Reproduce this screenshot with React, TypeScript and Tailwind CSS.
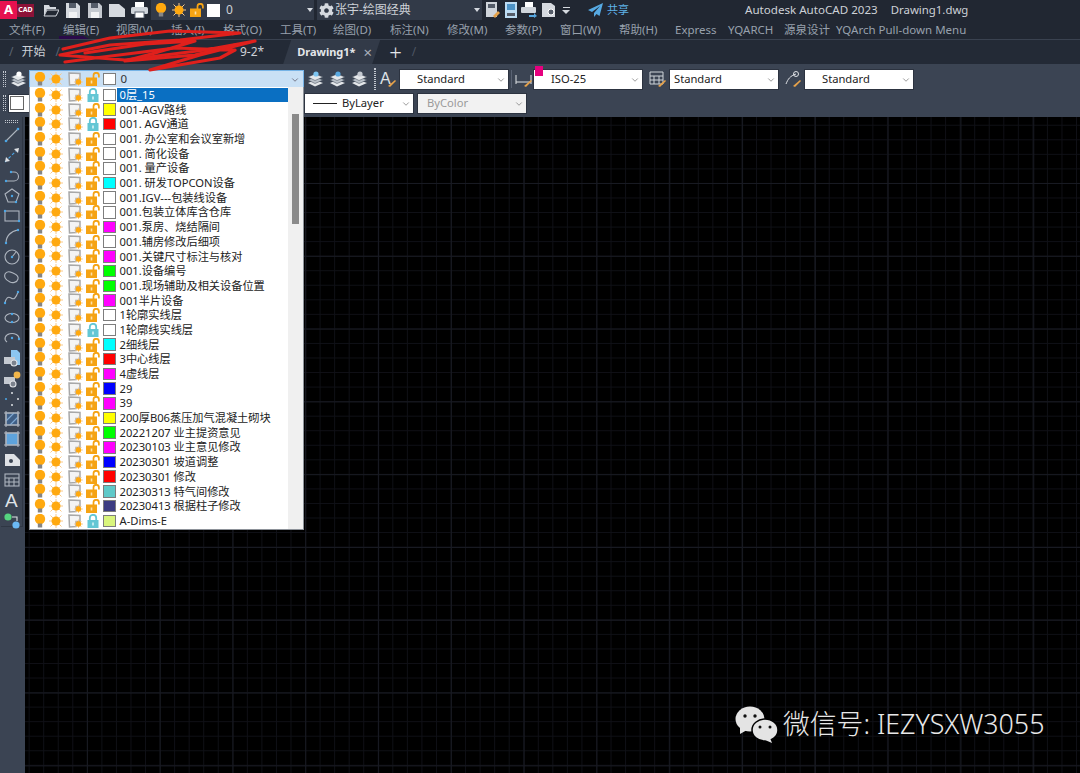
import { FaCog } from "react-icons/fa";
import { ChevronDown } from "lucide-react";

const cjk = "font-['Noto_Sans','Noto_Sans_CJK_SC',sans-serif]";

const menus = [
  ["文件(F)", "w-[54px]"],
  ["编辑(E)", "w-[53px]"],
  ["视图(V)", "w-[55px]"],
  ["插入(I)", "w-[52px]"],
  ["格式(O)", "w-[57px]"],
  ["工具(T)", "w-[53px]"],
  ["绘图(D)", "w-[57px]"],
  ["标注(N)", "w-[57px]"],
  ["修改(M)", "w-[58px]"],
  ["参数(P)", "w-[55px]"],
  ["窗口(W)", "w-[59px]"],
  ["帮助(H)", "w-[56px]"],
  ["Express", "w-[53px]"],
  ["YQARCH", "w-[56px]"],
  ["源泉设计", "w-[52px]"],
  ["YQArch Pull-down Menu", "w-[140px]"],
];

const layers: [string, string, boolean?][] = [
  ["0层_15", "#ffffff", true],
  ["001-AGV路线", "#ffff00"],
  ["001. AGV通道", "#ff0000", true],
  ["001. 办公室和会议室新增", "#ffffff"],
  ["001. 简化设备", "#ffffff"],
  ["001. 量产设备", "#ffffff"],
  ["001. 研发TOPCON设备", "#00ffff"],
  ["001.IGV---包装线设备", "#ffffff"],
  ["001.包装立体库含仓库", "#ffffff"],
  ["001.泵房、烧结隔间", "#ff00ff"],
  ["001.辅房修改后细项", "#ffffff"],
  ["001.关键尺寸标注与核对", "#ff00ff"],
  ["001.设备编号", "#00ff00"],
  ["001.现场辅助及相关设备位置", "#00ff00"],
  ["001半片设备", "#ff00ff"],
  ["1轮廓实线层", "#ffffff"],
  ["1轮廓线实线层", "#ffffff", true],
  ["2细线层", "#00ffff"],
  ["3中心线层", "#ff0000"],
  ["4虚线层", "#ff00ff"],
  ["29", "#0000ff"],
  ["39", "#ff00ff"],
  ["200厚B06蒸压加气混凝土砌块", "#ffff00"],
  ["20221207 业主提资意见", "#00ff00"],
  ["20230103 业主意见修改", "#ff00ff"],
  ["20230301 坡道调整", "#0000ff"],
  ["20230301 修改", "#ff0000"],
  ["20230313 特气间修改", "#5fc9c9"],
  ["20230413 根据柱子修改", "#3c3c82"],
  ["A-Dims-E", "#d9f57c", true],
];

function Bulb() {
  return (
    <svg width="12" height="14" viewBox="0 0 12 14" className="shrink-0">
      <circle cx="6" cy="5" r="5.2" fill="#ffa90f" />
      <rect x="3.8" y="9.5" width="4.4" height="4" fill="#858585" />
    </svg>
  );
}

function Sun({ size = 14 }: { size?: number }) {
  return (
    <svg width={size} height={size} viewBox="0 0 14 14" className="shrink-0">
      <g stroke="#f9c98a" strokeWidth="1">
        <path d="M7 0v14M0 7h14M1.5 1.5l11 11M12.5 1.5l-11 11" />
      </g>
      <circle cx="7" cy="7" r="4.5" fill="#ffa90f" />
    </svg>
  );
}

function Frame() {
  return (
    <svg width="15" height="14" viewBox="0 0 15 14" className="shrink-0">
      <path d="M1 1l11 .5v6h-4v5l-6.5.5z" fill="#f4f4f4" stroke="#a8a8a8" strokeWidth="1.5" />
      <g stroke="#f9c98a" strokeWidth=".9">
        <path d="M10.5 5.5v8.5M6 10h9M7.5 7l6 6M13.5 7l-6 6" />
      </g>
      <circle cx="10.5" cy="10" r="2.7" fill="#ffa90f" />
    </svg>
  );
}

function Lock({ closed }: { closed?: boolean }) {
  if (closed) {
    return (
      <svg width="14" height="14" viewBox="0 0 14 14" className="shrink-0">
        <path d="M3.8 6.5V4a3.2 3.2 0 016.4 0v2.5" fill="none" stroke="#63c6d4" strokeWidth="1.8" />
        <rect x="1.5" y="6" width="11" height="8" fill="#63c6d4" />
        <rect x="6.2" y="8.5" width="1.6" height="3" fill="#d8f3f6" />
      </svg>
    );
  }
  return (
    <svg width="14" height="14" viewBox="0 0 14 14" className="shrink-0">
      <path d="M7.5 6.5V3.5a2.7 2.7 0 015.4 0v2" fill="none" stroke="#f5a313" strokeWidth="1.7" />
      <rect x="0" y="5.5" width="11" height="8.5" fill="#f5a313" />
      <rect x="4.7" y="8.5" width="1.6" height="3" fill="#fbe0a8" />
    </svg>
  );
}

function LayerIcons({ closed }: { closed?: boolean }) {
  return (
    <>
      <span className="ml-[4px]"><Bulb /></span>
      <span className="ml-[3px]"><Sun /></span>
      <span className="ml-[5px]"><Frame /></span>
      <span className="ml-[3px]"><Lock closed={closed} /></span>
    </>
  );
}

function Swatch({ color }: { color: string }) {
  return (
    <span
      className="ml-[3px] h-[12.5px] w-[12.5px] shrink-0 border border-[#7d7d7d]"
      style={{ backgroundColor: color }}
    />
  );
}

function Grip() {
  return <span className="mx-[3px] h-[16px] w-[3px] shrink-0 border-x border-dotted border-[#c3c8d0]" />;
}

function Doc({ tone = "#d5d9df" }: { tone?: string }) {
  return (
    <svg width="16" height="17" viewBox="0 0 16 17" className="shrink-0">
      <path d="M1 1h11l3 3v12H1z" fill={tone} />
      <rect x="4" y="1" width="7" height="5" fill="#545c69" />
      <rect x="4" y="10" width="8" height="6" fill="#f1f2f4" />
    </svg>
  );
}

function Printer() {
  return (
    <svg width="17" height="16" viewBox="0 0 17 16" className="shrink-0">
      <rect x="4" y="0" width="9" height="5" fill="#fff" />
      <rect x="0" y="5" width="17" height="7" rx="1.5" fill="#cfd4da" />
      <rect x="4" y="10" width="9" height="6" fill="#fff" stroke="#59616e" />
    </svg>
  );
}

function LayerStack({ accent = "#ffffff" }: { accent?: string }) {
  return (
    <svg width="17" height="16" viewBox="0 0 17 16" className="shrink-0">
      <path d="M1 12l7-3 8 3-8 3.5z" fill="#e4e7ea" />
      <path d="M1 9l7-3 8 3-8 3.5z" fill="#bcc3cb" stroke="#3b4453" strokeWidth=".5" />
      <path d="M1 6l7-3 8 3-8 3.5z" fill="#e4e7ea" stroke="#3b4453" strokeWidth=".5" />
      <circle cx="9" cy="3" r="2.6" fill={accent} />
    </svg>
  );
}

function Brush({ children }: { children: React.ReactNode }) {
  return (
    <svg width="18" height="18" viewBox="0 0 18 18" className="shrink-0">
      {children}
      <path d="M9 16l7-6 1 1-6 6z" fill="#e6a24a" />
    </svg>
  );
}

function Combo({
  label,
  className = "",
  disabled,
}: {
  label: string;
  className?: string;
  disabled?: boolean;
}) {
  return (
    <div
      className={`relative flex h-[21px] w-[110px] shrink-0 items-center border border-[#2c3340] pl-[17px] text-[11.2px] ${
        disabled ? "bg-[#f2f2f2] text-[#9a9a9a]" : "bg-white text-[#222]"
      } ${className}`}
    >
      {label}
      <ChevronDown className="absolute right-[2px] top-[5px] h-[10px] w-[10px] text-[#888]" />
    </div>
  );
}

function TitleBar() {
  return (
    <div className="flex h-[20px] items-center bg-[#212732] text-[#cdd1d7]">
      <span className="flex h-[18px] w-[17px] items-center justify-center bg-[#e6114f] text-[13px] font-bold text-white">
        A
      </span>
      <span className="flex h-[13px] w-[17px] items-center justify-center bg-[#8c1238] text-[7px] font-bold text-white">
        CAD
      </span>
      <div className="ml-[9px] flex w-[108px] items-center justify-between pr-[3px]">
        <svg width="16" height="14" viewBox="0 0 16 14" className="shrink-0">
          <path d="M1 2h5l1 2h6v2H4L1 13z" fill="#d5d9df" />
          <path d="M4 7h12l-3 6H1z" fill="none" stroke="#d5d9df" />
        </svg>
        <Doc />
        <Doc tone="#c4c9d0" />
        <svg width="16" height="15" viewBox="0 0 16 15" className="shrink-0">
          <path d="M0 1h10l6 5v8H0z" fill="#d5d9df" />
        </svg>
        <Printer />
      </div>
      <div className="relative flex h-[20px] w-[163px] items-center bg-[#323a48]">
        <span className="ml-[4px]"><Bulb /></span>
        <span className="ml-[5px]"><Sun /></span>
        <span className="ml-[4px]"><Lock /></span>
        <span className="ml-[3px] h-[13px] w-[13px] bg-white" />
        <span className="ml-[6px] text-[12px]">0</span>
        <span className="absolute right-[1px] top-[8px] h-0 w-0 border-x-[3px] border-t-[4px] border-x-transparent border-t-[#d5d9df]" />
      </div>
      <div className="relative ml-[3px] flex h-[20px] w-[165px] items-center bg-[#323a48] text-[12px]">
        <FaCog className="ml-[2px] h-[15px] w-[15px] text-[#d5d9df]" />
        <span className="ml-[1px]">张宇-绘图经典</span>
        <span className="absolute right-[2px] top-[8px] h-0 w-0 border-x-[3px] border-t-[4px] border-x-transparent border-t-[#d5d9df]" />
      </div>
      <div className="ml-[4px] flex w-[84px] items-center justify-between">
        <svg width="14" height="16" viewBox="0 0 14 16" className="shrink-0">
          <rect x="0" y="0" width="11" height="15" fill="#cfd4da" />
          <rect x="2" y="2" width="7" height="4" fill="#545c69" />
          <path d="M7 14l5-5 2 2-5 5z" fill="#e6a24a" />
        </svg>
        <svg width="12" height="16" viewBox="0 0 12 16" className="shrink-0">
          <rect x="0" y="0" width="12" height="16" fill="#bcdcf3" />
          <rect x="2" y="2" width="8" height="6" fill="#4d93c6" />
          <rect x="2" y="11" width="8" height="3" fill="#545c69" />
        </svg>
        <svg width="16" height="16" viewBox="0 0 16 16" className="shrink-0">
          <rect x="4" y="0" width="8" height="5" fill="#fff" />
          <rect x="0" y="5" width="15" height="6" rx="1" fill="#cfd4da" />
          <path d="M8 13h5v-2l3 3-3 2v-1H8z" fill="#58a8e0" />
        </svg>
        <svg width="16" height="16" viewBox="0 0 16 16" className="shrink-0">
          <path d="M0 1h9l4 3v11H0z" fill="#d5d9df" />
          <circle cx="9" cy="10" r="3" fill="#545c69" stroke="#fff" />
        </svg>
        <span className="flex flex-col items-center gap-[2px]">
          <span className="h-[1px] w-[7px] bg-[#d5d9df]" />
          <span className="h-0 w-0 border-x-[4px] border-t-[4px] border-x-transparent border-t-[#d5d9df]" />
        </span>
      </div>
      <svg width="15" height="14" viewBox="0 0 15 14" className="ml-[18px] shrink-0">
        <path d="M15 0L0 7l4 2 8-6-6 7v4l2.5-3 3 2z" fill="#56a9e2" />
      </svg>
      <span className="ml-[4px] text-[11px] text-[#5fb2e8]">共享</span>
      <span className="ml-[116px] text-[11.6px]">Autodesk AutoCAD 2023</span>
      <span className="ml-[13px] text-[11.4px]">Drawing1.dwg</span>
    </div>
  );
}

function MenuBar() {
  return (
    <div className="flex h-[20px] items-center border-b border-[#3a4250] bg-[#212732] pl-[9px] text-[11.5px] text-[#98a1ad]">
      {menus.map(([label, width]) => (
        <span key={label} className={`shrink-0 whitespace-nowrap ${width}`}>
          {label}
        </span>
      ))}
    </div>
  );
}

function TabBar() {
  return (
    <div className="flex h-[24px] items-center bg-[#232a36] text-[12px] text-[#cdd1d7]">
      <span className="ml-[9px] text-[#5b6472]">/</span>
      <span className="ml-[8px]">开始</span>
      <span className="ml-[10px] text-[#5b6472]">/</span>
      <span className="ml-[180px]">9-2*</span>
      <div className="ml-[19px] flex h-[24px] w-[97px] items-center bg-[#323a48] pl-[14px] [clip-path:polygon(8px_0,100%_0,calc(100%-8px)_100%,0_100%)]">
        <span className="text-[11px] font-bold text-[#e4e7ea]">Drawing1*</span>
        <span className="ml-[8px] text-[15px] leading-none text-[#aab1bb]">×</span>
      </div>
      <span className="ml-[9px] text-[22px] font-light leading-none text-[#e4e7ea]">+</span>
      <span className="ml-[10px] text-[#4d5563]">/</span>
    </div>
  );
}

function Toolbars() {
  return (
    <div className="flex h-[53px] flex-col gap-[2px] bg-[#3b4453] pt-[4px]">
      <div className="flex h-[22px] items-center">
        <Grip />
        <span className="ml-[1px] w-[19px]"><LayerStack /></span>
        <div className="relative flex h-[19px] w-[275px] shrink-0 items-center border border-[#76b3e6] bg-[#c9e0f5]">
          <LayerIcons />
          <Swatch color="#ffffff" />
          <span className="ml-[5px] text-[11.5px] text-[#333]">0</span>
          <ChevronDown className="absolute right-[3px] top-[4px] h-[10px] w-[10px] text-[#667]" />
        </div>
        <div className="ml-[3px] flex w-[60px] items-center gap-[5px]">
          <LayerStack accent="#7cc4f0" />
          <LayerStack accent="#58a8e0" />
          <LayerStack accent="#c4c9d0" />
        </div>
        <span className="ml-[4px]"><Grip /></span>
        <span className="w-[20px]">
          <Brush>
            <text x="1" y="14" fontSize="16" fill="#dfe2e6" fontFamily="Liberation Sans">A</text>
          </Brush>
        </span>
        <Combo label="Standard" />
        <span className="ml-[2px] h-[18px] w-[1px] bg-[#596273]" />
        <span className="ml-[3px] w-[18px]">
          <Brush>
            <path d="M1 5v9M16 5v9M1 12h15" stroke="#dfe2e6" fill="none" />
          </Brush>
        </span>
        <div className="relative">
          <Combo label="ISO-25" className="!pl-[17px]" />
          <span className="absolute left-[2px] top-[-3px] h-[10px] w-[8px] bg-[#e6007e]" />
        </div>
        <span className="ml-[6px] w-[20px]">
          <Brush>
            <path d="M1 2h13v12H1zM1 6h13M1 10h13M5 6v8M10 6v8" stroke="#cfd4da" fill="none" />
          </Brush>
        </span>
        <Combo label="Standard" className="!pl-[4px]" />
        <span className="ml-[5px] w-[20px]">
          <Brush>
            <path d="M2 14c2-5 4-8 10-10" stroke="#dfe2e6" fill="none" />
            <circle cx="12" cy="4" r="2.5" fill="none" stroke="#dfe2e6" />
          </Brush>
        </span>
        <Combo label="Standard" />
      </div>
      <div className="flex h-[22px] items-center">
        <Grip />
        <div className="-ml-[1px] h-[19px] w-[101px] border border-[#2c3340] bg-white p-[1px]">
          <span className="block h-[14px] w-[14px] border border-[#666]" />
        </div>
        <div className="relative ml-[195px] flex h-[21px] w-[110px] shrink-0 items-center border border-[#2c3340] bg-white text-[11.2px] text-[#222]">
          <span className="ml-[8px] h-[1px] w-[24px] bg-[#222]" />
          <span className="ml-[5px]">ByLayer</span>
          <ChevronDown className="absolute right-[2px] top-[5px] h-[10px] w-[10px] text-[#888]" />
        </div>
        <Combo label="ByColor" disabled className="ml-[3px] !pl-[9px]" />
      </div>
    </div>
  );
}

function DrawIcon({ children }: { children: React.ReactNode }) {
  return (
    <svg width="20" height="20" viewBox="0 0 20 20" className="shrink-0" fill="none" stroke="#aeb5bf" strokeWidth="1.1">
      {children}
    </svg>
  );
}

const dot = "#4ba6e6";

const drawTools = [
  <><path d="M4 16L16 4" /><circle cx="4" cy="16" r="1.3" fill={dot} stroke="none" /><circle cx="16" cy="4" r="1.3" fill={dot} stroke="none" /></>,
  <><path d="M3 17L17 3" strokeDasharray="3 2" stroke={dot} /><path d="M17 3l-5 1 4 4zM3 17l5-1-4-4z" fill="#dfe2e6" stroke="none" /></>,
  <><path d="M4 15h8a4 4 0 000-9H9" /><circle cx="4" cy="15" r="1.2" fill={dot} stroke="none" /><circle cx="9" cy="6" r="1.2" fill={dot} stroke="none" /></>,
  <><path d="M10 3l7 5-3 8H6L3 8z" /><circle cx="10" cy="10" r="1.2" fill={dot} stroke="none" /><circle cx="14" cy="16" r="1.2" fill={dot} stroke="none" /></>,
  <><rect x="3" y="5" width="14" height="10" /><circle cx="3" cy="5" r="1.2" fill={dot} stroke="none" /><circle cx="17" cy="15" r="1.2" fill={dot} stroke="none" /></>,
  <><path d="M4 17C4 10 9 5 16 4" /><circle cx="4" cy="17" r="1.2" fill={dot} stroke="none" /><circle cx="16" cy="4" r="1.2" fill={dot} stroke="none" /></>,
  <><circle cx="10" cy="10" r="7" /><path d="M10 10l4-5" /><circle cx="10" cy="10" r="1.2" fill={dot} stroke="none" /></>,
  <><path d="M3 7c2-4 6-2 8-1s6 2 5 6-6 4-8 3-7-3-5-8z" /></>,
  <><path d="M3 16c1-5 3-7 6-5s5 0 7-6" /><circle cx="3" cy="16" r="1.2" fill={dot} stroke="none" /><circle cx="16" cy="5" r="1.2" fill={dot} stroke="none" /></>,
  <><ellipse cx="10" cy="10" rx="7" ry="4.5" /><circle cx="10" cy="6" r="1.2" fill={dot} stroke="none" /><circle cx="10" cy="14" r="1.2" fill={dot} stroke="none" /></>,
  <><path d="M5 14a7 5 0 1112 -3" /><circle cx="10" cy="10" r="1.2" fill={dot} stroke="none" /><circle cx="17" cy="11" r="1.2" fill={dot} stroke="none" /></>,
  <><path d="M9 2h6l3 3v12H9z" fill="#8cc6f0" stroke="none" /><rect x="2" y="9" width="11" height="7" fill="#c4c9d0" stroke="none" /><circle cx="12" cy="15" r="3" fill="#7b828d" stroke="#dfe2e6" /></>,
  <><rect x="2" y="8" width="11" height="7" fill="#c4c9d0" stroke="none" /><circle cx="15" cy="6" r="3.4" fill="#f2b64a" stroke="none" /><circle cx="11" cy="15" r="3" fill="#7b828d" stroke="#dfe2e6" /></>,
  <><circle cx="10" cy="4" r="1" fill="#dfe2e6" stroke="none" /><circle cx="4" cy="10" r="1" fill={dot} stroke="none" /><circle cx="16" cy="10" r="1" fill="#dfe2e6" stroke="none" /><circle cx="10" cy="16" r="1" fill="#dfe2e6" stroke="none" /></>,
  <><rect x="4" y="4" width="12" height="12" fill="#3f5f86" /><path d="M4 12l8-8M8 16l8-8" stroke="#7fa9d3" /><path d="M2 4h16M2 16h16M4 2v16M16 2v16" /></>,
  <><rect x="4" y="4" width="12" height="12" fill="#5ea3dc" /><path d="M2 4h16M2 16h16M4 2v16M16 2v16" /></>,
  <><path d="M3 4h9l6 6v6H3z" fill="#dfe2e6" stroke="none" /><circle cx="9" cy="11" r="2" fill="#3b4453" stroke="none" /></>,
  <><rect x="3" y="4" width="14" height="12" /><path d="M3 8h14M3 12h14M7 8v8M12 8v8" /></>,
  <text x="3" y="17" fontSize="19" fill="#dfe2e6" stroke="none" fontFamily="Liberation Sans">A</text>,
  <><circle cx="6" cy="6" r="3.6" fill="#55d47f" stroke="none" /><path d="M10 6h5v4" stroke="#dfe2e6" /><circle cx="14" cy="14" r="3.6" fill="#6bb9f5" stroke="none" /></>,
];

function LeftRail() {
  return (
    <aside className="w-[25px] shrink-0 bg-[#3b4453]">
      <div className="ml-[1px] flex h-[410px] w-[22px] flex-col items-center border-r border-b border-[#2f3744]">
        <span className="mt-[3px] h-[3px] w-[13px] shrink-0 border-y border-dotted border-[#c3c8d0]" />
        <div className="mt-[2px] flex flex-col items-center gap-[0.3px]">
          {drawTools.map((tool, index) => (
            <DrawIcon key={index}>{tool}</DrawIcon>
          ))}
        </div>
      </div>
    </aside>
  );
}

function LayerDropdown() {
  return (
    <div className="absolute left-[29px] top-[87px] z-10 flex h-[443px] w-[275px] overflow-hidden border-x-[1px] border-b-[1px] border-[#8d9299] bg-white">
      <div className="w-[258px] shrink-0 pt-[0.5px]">
        {layers.map(([label, color, closed], index) => (
          <div key={label} className="flex h-[14.7px] items-center">
            <LayerIcons closed={closed} />
            <Swatch color={color} />
            <span
              className={`ml-[1px] flex h-full grow items-center whitespace-nowrap pl-[3px] pt-[1px] text-[11.2px] ${
                index === 0 ? "bg-[#0a6fc2] text-white" : "text-[#222]"
              }`}
            >
              {label}
            </span>
          </div>
        ))}
      </div>
      <div className="grow bg-[#f0f0f0] pl-[4px] pt-[27px]">
        <div className="h-[110px] w-[7px] bg-[#8a8a8a]" />
      </div>
    </div>
  );
}

function Scribble() {
  return (
    <svg width="210" height="50" viewBox="0 0 210 50" fill="none" className="absolute left-[55px] top-[25px] z-[5]">
      <path d="M4 11h24l6 3H4z" fill="#2a0a4a" />
      <g stroke="#e0201c" strokeWidth="3.2" strokeLinecap="round" strokeLinejoin="round">
        <path d="M8 24L55 13l60-7 70 2-60 7-70 5-50 10 65 5 80-10 50-9-55 14-50 15 70-12 15-8-60-2-80 10-30 4" />
        <path d="M30 28l60-9 50-3-40 12-30 8 70-6 40-10" />
      </g>
    </svg>
  );
}

function Watermark() {
  return (
    <div className="absolute left-[735px] top-[705px] flex items-center text-[#e8e8e8]">
      <svg width="43" height="38" viewBox="0 0 43 38" className="shrink-0">
        <ellipse cx="15" cy="14" rx="14.5" ry="12.5" fill="#e4e4e4" />
        <path d="M5 22l0 7 7-4z" fill="#e4e4e4" />
        <circle cx="10" cy="11" r="1.7" fill="#111" />
        <circle cx="20" cy="11" r="1.7" fill="#111" />
        <ellipse cx="30" cy="25" rx="13" ry="11" fill="#e4e4e4" stroke="#000" strokeWidth="1.5" />
        <path d="M35 33l2 5-7-3z" fill="#e4e4e4" />
        <circle cx="25" cy="22" r="1.5" fill="#111" />
        <circle cx="35" cy="22" r="1.5" fill="#111" />
      </svg>
      <span className="ml-[5px] mt-[1px] text-[26.8px] font-light leading-none">微信号: IEZYSXW3055</span>
    </div>
  );
}

export default function App() {
  return (
    <div className={`relative flex h-[773px] w-[1080px] flex-col overflow-hidden bg-black ${cjk}`}>
      <TitleBar />
      <MenuBar />
      <TabBar />
      <Toolbars />
      <div className="flex min-h-0 grow">
        <LeftRail />
        <main className="grow bg-black bg-[linear-gradient(to_right,#181a22_1px,transparent_1px),linear-gradient(to_bottom,#181a22_1px,transparent_1px),linear-gradient(to_right,#0f1016_1px,transparent_1px),linear-gradient(to_bottom,#0f1016_1px,transparent_1px)] [background-position:61.9px_66px,61.9px_66px,3.66px_7.76px,3.66px_7.76px] [background-size:72.8px_72.8px,72.8px_72.8px,14.56px_14.56px,14.56px_14.56px]" />
      </div>
      <Scribble />
      <LayerDropdown />
      <Watermark />
    </div>
  );
}
